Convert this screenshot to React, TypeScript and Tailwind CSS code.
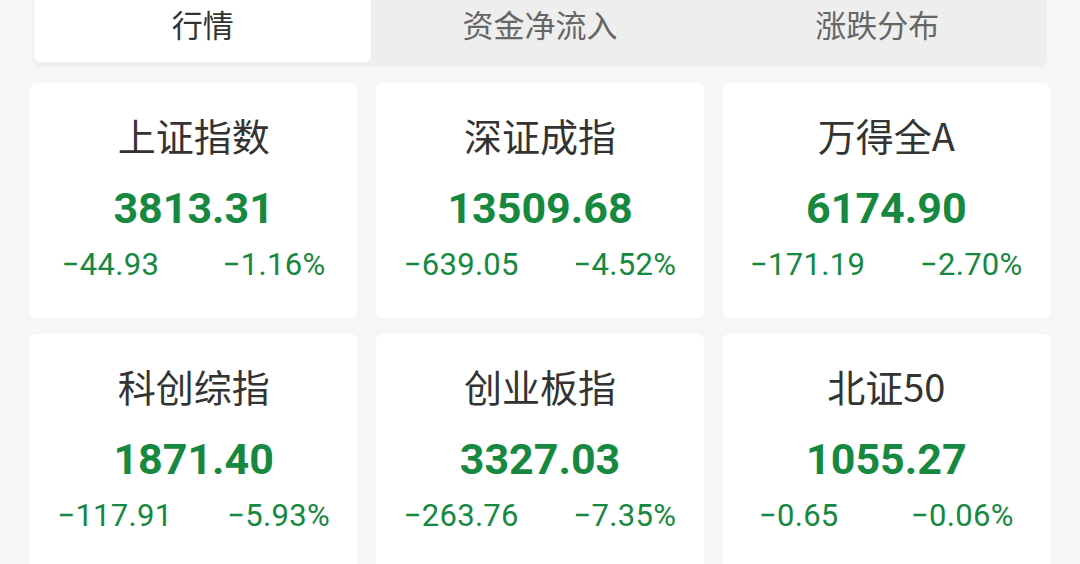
import React from 'react'

// 指数行情卡片数据
interface IndexQuote {
  name: string
  price: string
  change: string
  percent: string
}

const quotes: IndexQuote[] = [
  { name: '上证指数', price: '3813.31', change: '−44.93', percent: '−1.16%' },
  { name: '深证成指', price: '13509.68', change: '−639.05', percent: '−4.52%' },
  { name: '万得全A', price: '6174.90', change: '−171.19', percent: '−2.70%' },
  { name: '科创综指', price: '1871.40', change: '−117.91', percent: '−5.93%' },
  { name: '创业板指', price: '3327.03', change: '−263.76', percent: '−7.35%' },
  { name: '北证50', price: '1055.27', change: '−0.65', percent: '−0.06%' },
]

const tabs = ['行情', '资金净流入', '涨跌分布']

const cjk = "font-['Noto_Sans_CJK_SC','Noto_Sans',sans-serif]"
const num = "font-['Roboto','Noto_Sans_CJK_SC',sans-serif]"

const QuoteCard = ({ q }: { q: IndexQuote }) => (
  <div className="flex h-[235px] flex-col items-center rounded-md bg-white">
    <div className={`${cjk} mt-[30px] text-[38px] leading-[44px] text-[#333]`}>{q.name}</div>
    <div className={`${num} mt-[29px] text-[43px] font-bold leading-[44px] text-[#16883f]`}>
      {q.price}
    </div>
    <div
      className={`${num} mt-[19px] flex w-full justify-around text-[31px] leading-[32px] tracking-[0.3px] text-[#16883f]`}
    >
      <span>{q.change}</span>
      <span>{q.percent}</span>
    </div>
  </div>
)

export default function App() {
  return (
    <div className="h-[564px] w-[1080px] overflow-hidden bg-[#f6f6f6]">
      {/* 顶部切换 */}
      <div className="mx-[33px] flex h-[67px] rounded-b-lg bg-[#eeeeee] pb-[5px] pl-[1px] pr-[1px]">
        {tabs.map((t, i) => (
          <div
            key={t}
            className={`${cjk} flex flex-1 items-center justify-center pb-[14px] text-[31px] ${
              i === 0 ? 'rounded-b-md bg-white text-[#333]' : 'text-[#666]'
            }`}
          >
            {t}
          </div>
        ))}
      </div>

      {/* 指数卡片 */}
      <div className="mx-[30px] mt-[16px] grid grid-cols-3 gap-x-[19px] gap-y-[16px]">
        {quotes.map((q) => (
          <QuoteCard key={q.name} q={q} />
        ))}
      </div>
    </div>
  )
}
